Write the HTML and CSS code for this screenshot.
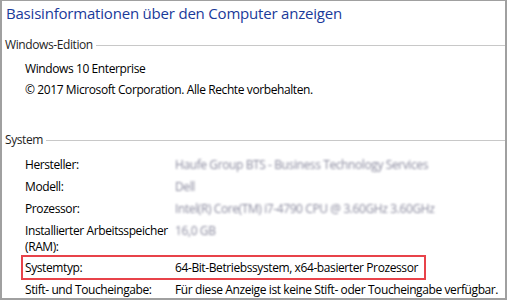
FILE: index.html
```html
<!DOCTYPE html>
<html lang="de">
<head>
    <meta charset="UTF-8">
    <title>System</title>
    <link rel="stylesheet" href="styles.css">
</head>
<body>
    <div class="frame">
        <h1 class="title">Basisinformationen über den Computer anzeigen</h1>

        <div class="section">
            <div class="section-head"><span>Windows-Edition</span></div>
            <div class="plain-row">Windows 10 Enterprise</div>
            <div class="plain-row">© 2017 Microsoft Corporation. Alle Rechte vorbehalten.</div>
        </div>

        <div class="section section-system">
            <div class="section-head"><span>System</span></div>
            <div class="row">
                <div class="label">Hersteller:</div>
                <div class="value blurred">Haufe Group BTS - Business Technology Services</div>
            </div>
            <div class="row">
                <div class="label">Modell:</div>
                <div class="value blurred">Dell</div>
            </div>
            <div class="row">
                <div class="label">Prozessor:</div>
                <div class="value blurred">Intel(R) Core(TM) i7-4790 CPU @ 3.60GHz 3.60GHz</div>
            </div>
            <div class="row">
                <div class="label">Installierter Arbeitsspeicher (RAM):</div>
                <div class="value blurred">16,0 GB</div>
            </div>
            <div class="row highlight">
                <div class="label">Systemtyp:</div>
                <div class="value">64-Bit-Betriebssystem, x64-basierter Prozessor</div>
            </div>
            <div class="row">
                <div class="label">Stift- und Toucheingabe:</div>
                <div class="value">Für diese Anzeige ist keine Stift- oder Toucheingabe verfügbar.</div>
            </div>
        </div>
    </div>
</body>
</html>
```

FILE: styles.css
```css
body {
    margin: 0;
    font-family: "Open Sans", "Noto Sans", sans-serif;
    font-size: 12px;
    letter-spacing: -0.4px;
    color: #000;
    background-color: #fff;
}

.frame {
    box-sizing: border-box;
    width: 507px;
    height: 300px;
    border: 2px solid #a0a0a0;
    border-top-width: 1px;
    overflow: hidden;
}

.title {
    margin: 0;
    padding-left: 4px;
    font-size: 15px;
    letter-spacing: -0.2px;
    font-weight: normal;
    line-height: 24px;
    color: #1a3a9a;
}

.section {
    margin-top: 10px;
}

.section-system {
    margin-top: 29px;
}

.section-head {
    display: flex;
    align-items: center;
    gap: 3px;
    padding-left: 3px;
    line-height: 20px;
    margin-bottom: 4px;
    color: #1e1e1e;
}

.section-head::after {
    content: "";
    flex: 1;
    height: 1px;
    background-color: #c8c8c8;
    margin-top: 1px;
}

.plain-row {
    padding: 2px 0 3px 23px;
    line-height: 16px;
}

.row {
    display: flex;
    padding: 3px 0 3px 23px;
    line-height: 16px;
}

.label {
    width: 150px;
    flex-shrink: 0;
}

.value {
    white-space: nowrap;
}

.blurred {
    color: #8a8a9e;
    filter: blur(1.3px);
}

.highlight {
    width: fit-content;
    border: 2px solid #e8434a;
    margin: -3px 0 -1px 19px;
    padding: 3px 6px 2px 2px;
}
```
